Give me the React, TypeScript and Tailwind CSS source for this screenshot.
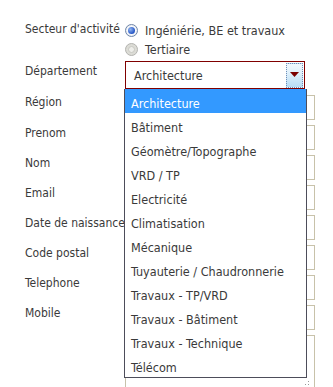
import React from "react";

const OPTIONS = [
  "Architecture",
  "Bâtiment",
  "Géomètre/Topographe",
  "VRD / TP",
  "Electricité",
  "Climatisation",
  "Mécanique",
  "Tuyauterie / Chaudronnerie",
  "Travaux - TP/VRD",
  "Travaux - Bâtiment",
  "Travaux - Technique",
  "Télécom",
];

const FIELDS = ["Prenom", "Nom", "Email", "Date de naissance", "Code postal", "Telephone", "Mobile"];

function Radio({ checked }: { checked?: boolean }) {
  return checked ? (
    <span className="flex h-[13px] w-[13px] items-center justify-center rounded-full border border-[#6f86a8] bg-[radial-gradient(circle,#ffffff_40%,#d6dde8)]">
      <span className="h-[7px] w-[7px] rounded-full bg-[radial-gradient(circle_at_35%_35%,#8fb4f0,#2454c4_70%)]" />
    </span>
  ) : (
    <span className="flex h-[13px] w-[13px] items-center justify-center rounded-full border border-[#b4b4b0] bg-[#dcdcd6]">
      <span className="h-[7px] w-[7px] rounded-full border border-[#c8c8c2] bg-[#eeeeea]" />
    </span>
  );
}

function Label({ children, className = "" }: { children: React.ReactNode; className?: string }) {
  return <div className={`w-[100px] shrink-0 whitespace-nowrap text-[12px] ${className}`}>{children}</div>;
}

export default function App() {
  return (
    <div
      className="relative h-[387px] w-[333px] overflow-hidden bg-white pl-[25px] text-[12.5px] leading-[15px] text-[#3a3a3a]"
      style={{ fontFamily: "'DejaVu Sans Condensed', 'DejaVu Sans', sans-serif" }}
    >
      {/* secteur */}
      <div className="mt-[21px] flex">
        <Label className="pt-[1px]">Secteur d'activité</Label>
        <div className="flex flex-col">
          <label className="flex h-[18px] items-center gap-[6px]">
            <Radio checked />
            <span className="pl-[1px]">Ingéniérie, BE et travaux</span>
          </label>
          <label className="flex h-[19px] items-center gap-[6px] pt-[1px]">
            <Radio />
            <span className="pl-[1px]">Tertiaire</span>
          </label>
        </div>
      </div>

      {/* departement select + open list */}
      <div className="mt-[3px] flex">
        <Label className="pt-[3px]">Département</Label>
        <div className="relative">
          <div className="flex h-[28px] w-[180px] items-center justify-between border border-[#800000] pl-[8px] pr-[1px]">
            <span className="pt-[1px]">Architecture</span>
            <span className="flex h-[25px] w-[17px] items-start justify-center border border-dotted border-[#6f8fb8] bg-[linear-gradient(#f2f9fe_0%,#dff0fb_40%,#b8dcf4_100%)] pt-[8px]">
              <svg width="9" height="5" viewBox="0 0 9 5">
                <path d="M0 0h9L4.5 5z" fill="#7a0000" />
              </svg>
            </span>
          </div>
          <ul className="absolute left-[-1px] top-[28px] z-10 w-[183px] border border-t-0 border-[#4d4d5a] bg-white">
            {OPTIONS.map((o, i) => (
              <li
                key={o}
                className={`flex h-[24px] items-center whitespace-nowrap pl-[6px] pt-[4px] ${
                  i === 0 ? "bg-[#3399ff] text-white" : ""
                }`}
              >
                {o}
              </li>
            ))}
          </ul>
        </div>
      </div>

      {/* region */}
      <div className="mt-[6px] flex">
        <Label className="pt-[0px]">Région</Label>
        <div className="h-[25px] w-[190px] border border-[#c8c2aa]" />
      </div>

      {FIELDS.map((f) => (
        <div key={f} className="mt-[5px] flex">
          <Label className="pt-[1px]">{f}</Label>
          <div className="h-[25px] w-[190px] border border-[#c8c2aa]" />
        </div>
      ))}

      {/* comment area */}
      <div className="mt-[5px] flex">
        <Label>&nbsp;</Label>
        <div className="relative h-[60px] w-[190px] border border-[#c8c2aa]">
          <span className="absolute right-[5px] top-[45px] h-[1px] w-[1px] bg-[#9a9a9a]" />
          <span className="absolute right-[5px] top-[48px] h-[1px] w-[1px] bg-[#9a9a9a]" />
          <span className="absolute right-[8px] top-[48px] h-[1px] w-[1px] bg-[#9a9a9a]" />
        </div>
      </div>
    </div>
  );
}
